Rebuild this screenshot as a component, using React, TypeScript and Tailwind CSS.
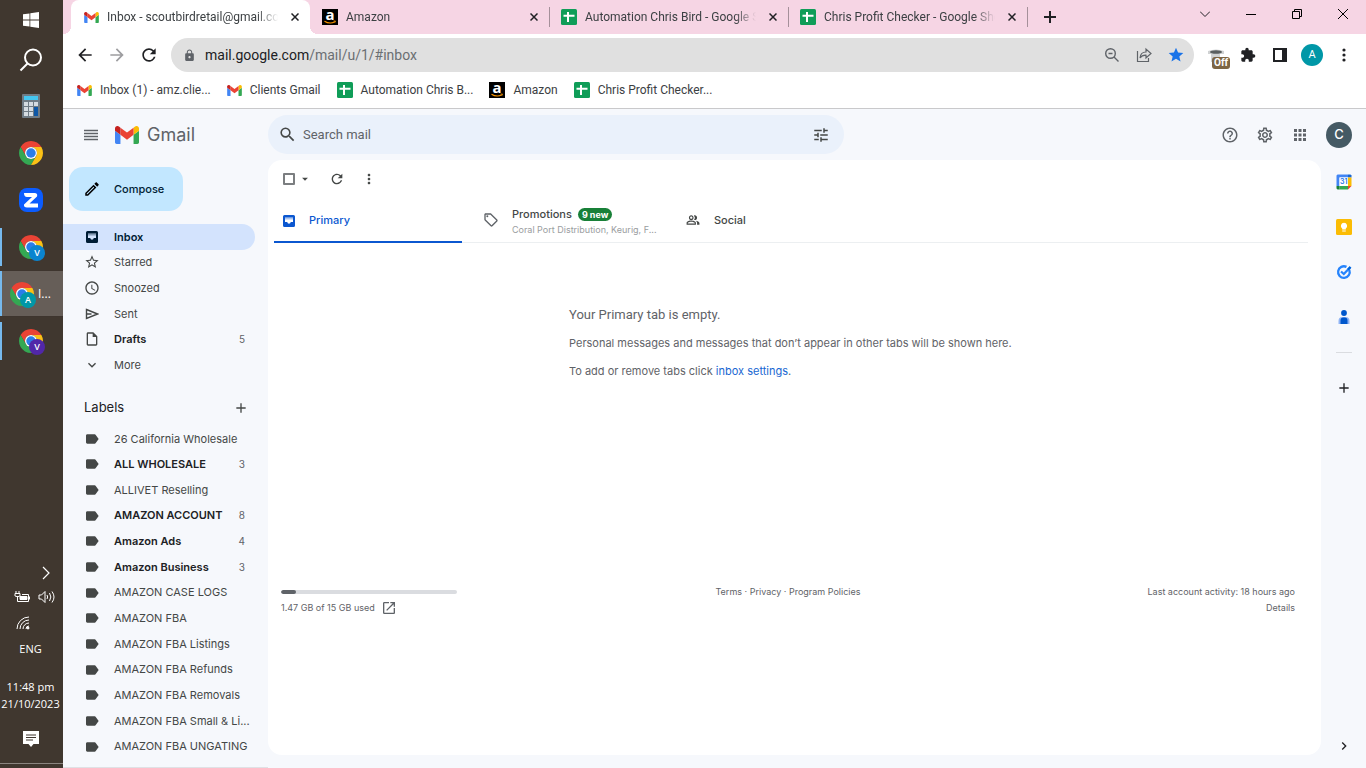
import React from "react";
import {
  MdAdd,
  MdApps,
  MdArrowBack,
  MdArrowDropDown,
  MdArrowForward,
  MdChevronRight,
  MdExpandMore,
  MdExtension,
  MdHelpOutline,
  MdLabel,
  MdLock,
  MdMoreVert,
  MdOpenInNew,
  MdOutlineEdit,
  MdOutlineInsertDriveFile,
  MdOutlinePeopleAlt,
  MdOutlineSell,
  MdOutlineSettings,
  MdRefresh,
  MdSchedule,
  MdSearch,
  MdStar,
  MdStarOutline,
  MdTune,
} from "react-icons/md";

type P = { className?: string };

const GmailLogo = ({ className = "h-[11px] w-[15px]" }: P) => (
  <svg viewBox="52 42 88 66" className={className} aria-hidden="true">
    <path fill="#4285f4" d="M58 108h14V74L52 59v43c0 3.32 2.69 6 6 6" />
    <path fill="#34a853" d="M120 108h14c3.32 0 6-2.69 6-6V59l-20 15" />
    <path fill="#fbbc04" d="M120 48v26l20-15v-8c0-7.42-8.47-11.65-14.4-7.2" />
    <path fill="#ea4335" d="M72 74V48l24 18 24-18v26L96 92" />
    <path fill="#c5221f" d="M52 51v8l20 15V48l-5.6-4.2c-5.94-4.45-14.4-.22-14.4 7.2" />
  </svg>
);

const SheetsLogo = () => (
  <svg viewBox="0 0 16 16" className="size-4" aria-hidden="true">
    <rect width="16" height="16" rx="1.5" fill="#0f9d58" />
    <path d="M6 3h2v2.800h5.500v2H8V13H6V7.800H2.500v-2H6z" fill="#fff" />
  </svg>
);

const AmazonLogo = () => (
  <svg viewBox="0 0 16 16" className="size-4" aria-hidden="true">
    <rect width="16" height="16" fill="#000" />
    <text x="8" y="11" textAnchor="middle" fontSize="15" fontWeight="700" fill="#fff" fontFamily="Open Sans, sans-serif">
      a
    </text>
    <path d="M2.500 12.200q5.200 3.400 10.300.6" fill="none" stroke="#f90" strokeWidth="1.100" />
    <path d="M11.600 12h1.900l-.6 1.700" fill="none" stroke="#f90" strokeWidth=".8" />
  </svg>
);

const ChromeLogo = () => (
  <svg viewBox="0 0 48 48" className="size-6" aria-hidden="true">
    <path fill="#ea4335" d="M24 12h20.780A24 24 0 0 0 3.220 12L13.610 30A12 12 0 0 1 24 12z" />
    <path fill="#34a853" d="M13.610 30L3.220 12A24 24 0 0 0 24 48L34.390 30A12 12 0 0 1 13.610 30z" />
    <path fill="#fbc116" d="M34.390 30L24 48A24 24 0 0 0 44.780 12H24A12 12 0 0 1 34.390 30z" />
    <circle cx="24" cy="24" r="12" fill="#fff" />
    <circle cx="24" cy="24" r="9.500" fill="#2a7de9" />
  </svg>
);

const InboxIcon = () => (
  <svg viewBox="0 0 12 12" className="size-3" aria-hidden="true" fill="currentColor">
    <path
      fillRule="evenodd"
      d="M1.500 0h9A1.500 1.500 0 0 1 12 1.500v9a1.500 1.500 0 0 1-1.500 1.500h-9A1.500 1.500 0 0 1 0 10.500v-9A1.500 1.500 0 0 1 1.500 0zM2 2.500V7h2.200q.3 1.700 1.800 1.700T7.800 7H10V2.500z"
    />
    <path d="M2 2.500h8v2H2z" opacity=".35" />
  </svg>
);

function ChromeProfile({ letter, badge, active }: { letter: string; badge: string; active?: boolean }) {
  return (
    <button
      aria-label={`Chrome profile ${letter}`}
      className={`flex h-[47px] w-full items-center ${active ? "border-y border-[#3e352e] bg-[#665e58]" : ""}`}
    >
      <span className={`w-0.5 bg-[#76b9ed] ${active ? "h-full" : "h-[38px]"}`} />
      <span className={`relative ${active ? "ml-2" : "ml-[17px]"}`}>
        <ChromeLogo />
        <span className={`absolute top-2.5 left-2.5 flex size-4 items-center justify-center rounded-full text-[9px] leading-none font-semibold text-white ${badge}`}>
          {letter}
        </span>
      </span>
      {active && <span className="ml-1 text-[12px] text-white">I...</span>}
    </button>
  );
}

function Taskbar() {
  return (
    <aside className="flex w-[63px] shrink-0 flex-col items-center bg-[#40372f] font-['Open_Sans',sans-serif] text-white">
      <button aria-label="Start" className="flex h-10 w-full items-center justify-center pr-0.5">
        <svg viewBox="0 0 16 16" className="size-4" fill="#fff">
          <path d="M0 2.300l6.500-.9v6.200H0zM7.300 1.300L16 0v7.600H7.300zM0 8.400h6.500v6.200L0 13.700zM7.300 8.400H16V16l-8.700-1.200z" />
        </svg>
      </button>
      <button aria-label="Search" className="flex h-10 w-full items-center justify-center pr-0.5">
        <svg viewBox="0 0 24 24" className="size-6" fill="none" stroke="#fff" strokeWidth="2">
          <circle cx="14" cy="9.500" r="8" />
          <path d="M8.500 15.500L1.500 22.500" />
        </svg>
      </button>
      <div className="flex w-full flex-col pt-0.5">
        <button aria-label="Calculator" className="flex h-[47px] items-center justify-center pr-0.5">
          <svg viewBox="0 0 18 24" className="h-6 w-[18px]">
            <rect width="18" height="24" rx="1" fill="#6f7b85" />
            <rect x="2" y="2" width="14" height="4" fill="#45c6f0" />
            <path fill="#d5dce2" d="M2 8h4v4H2zM7 8h4v4H7zM12 8h4v4h-4zM2 13h4v4H2zM7 13h4v4H7zM2 18h4v4H2zM7 18h4v4H7z" />
            <rect x="12" y="13" width="4" height="9" fill="#0d57a7" />
          </svg>
        </button>
        <button aria-label="Chrome" className="flex h-[47px] items-center justify-center pr-0.5">
          <ChromeLogo />
        </button>
        <button aria-label="Zoom" className="flex h-[47px] items-center justify-center pr-0.5">
          <svg viewBox="0 0 24 24" className="size-6">
            <rect width="24" height="24" rx="8" fill="#0b5cff" />
            <path d="M5 5h10.500q3.500 0 2.500 3.500L10.500 15.500H19v4H8q-3.500 0-3-3L13 9H8Q5 9 5 5z" fill="#fff" />
          </svg>
        </button>
        <ChromeProfile letter="V" badge="bg-[#0a84cf]" />
        <ChromeProfile letter="A" badge="bg-[#0097a7]" active />
        <ChromeProfile letter="V" badge="bg-[#5127a8]" />
      </div>
      <div className="mt-auto flex w-full flex-col items-center pr-0.5 text-[11px] leading-[17px]">
        <svg viewBox="0 0 8 14" className="mr-[11px] h-[14px] w-2 self-end" fill="none" stroke="#fff" strokeWidth="1.200">
          <path d="M1 1l6 6-6 6" />
        </svg>
        <div className="mt-2.5 flex items-center gap-2 pl-2">
          <svg viewBox="0 0 16 14" className="h-[14px] w-4" fill="none" stroke="#fff">
            <path d="M2 1v2M5 1v2M1 3.500h5v2.500q-2.500 1.500-5 0zM3.500 6v5.500H14.500V4.500H8M15.500 6.500v3" />
            <path d="M6 6.500h7v3H6z" fill="#fff" />
          </svg>
          <svg viewBox="0 0 17 14" className="h-[14px] w-[17px]" fill="none" stroke="#fff">
            <path d="M1 5h2.500L7 1.500v11L3.500 9H1zM9 5q1.300 2 0 4M11.500 3q2.700 4 0 8M14 1.500q4 5.500 0 11" />
          </svg>
        </div>
        <svg viewBox="0 0 14 14" className="mt-3 mr-4 size-[14px]" fill="none" stroke="#fff">
          <path d="M1 13A12 12 0 0 1 13 1M4 13a9 9 0 0 1 9-9M7 13a6 6 0 0 1 6-6M10 13a3 3 0 0 1 3-3" />
          <circle cx="12" cy="12" r="1" fill="#fff" />
        </svg>
        <span className="mt-2.5">ENG</span>
        <span className="mt-[21px]">11:48 pm</span>
        <span>21/10/2023</span>
        <button aria-label="Notifications" className="mt-[19px] mb-[15px]">
          <svg viewBox="0 0 16 17" className="h-[17px] w-4">
            <path d="M0 0h16v13h-5.500L8 16l-2.500-3H0z" fill="#fff" />
            <path d="M3 4h10M3 6.500h10M3 9h7" stroke="#40372f" />
          </svg>
        </button>
      </div>
      <div className="mb-1 h-px w-full bg-[#8b8580]" />
    </aside>
  );
}

function CloseX() {
  return (
    <svg viewBox="0 0 8 8" className="size-2" stroke="#202124" strokeWidth="1.500">
      <path d="M.5.5l7 7M7.500.5l-7 7" />
    </svg>
  );
}

const browserTabs = [
  { title: "Inbox - scoutbirdretail@gmail.com", icon: <GmailLogo />, active: true },
  { title: "Amazon", icon: <AmazonLogo /> },
  { title: "Automation Chris Bird - Google Sheets", icon: <SheetsLogo /> },
  { title: "Chris Profit Checker - Google Sheets", icon: <SheetsLogo /> },
];

function TabStrip() {
  return (
    <div className="flex h-[34px] bg-[#f6d5e4] pl-2">
      {browserTabs.map((t) => (
        <div
          key={t.title}
          className={`relative flex w-[239px] items-center gap-2 pr-[11px] pl-3 ${t.active ? "rounded-t-lg bg-white" : ""}`}
        >
          {t.active && (
            <>
              <span className="absolute bottom-0 -left-2 size-2 bg-[radial-gradient(circle_at_top_left,transparent_8px,white_8px)]" />
              <span className="absolute -right-2 bottom-0 size-2 bg-[radial-gradient(circle_at_top_right,transparent_8px,white_8px)]" />
            </>
          )}
          <span className="flex w-4 shrink-0 justify-center">{t.icon}</span>
          <span className="min-w-0 flex-1 overflow-hidden mask-r-from-[150px] mask-r-to-[171px] whitespace-nowrap">{t.title}</span>
          <button aria-label="Close tab" className="pl-1">
            <CloseX />
          </button>
          {!t.active && <span className="absolute top-[7px] -right-px h-5 w-px bg-[#a5909a]" />}
        </div>
      ))}
      <button aria-label="New tab" className="flex w-[46px] items-center justify-center">
        <svg viewBox="0 0 12 12" className="size-3" stroke="#202124" strokeWidth="2">
          <path d="M6 0v12M0 6h12" />
        </svg>
      </button>
      <div className="ml-auto flex h-7">
        <button aria-label="Search tabs" className="flex w-[46px] items-center justify-center">
          <svg viewBox="0 0 10 6" className="h-[6px] w-[10px]" fill="none" stroke="#202124">
            <path d="M0 .5l5 5 5-5" />
          </svg>
        </button>
        <button aria-label="Minimize" className="flex w-[46px] items-center justify-center">
          <span className="h-px w-2.5 bg-black" />
        </button>
        <button aria-label="Restore" className="flex w-[46px] items-center justify-center">
          <svg viewBox="0 0 10 10" className="size-2.5" fill="none" stroke="#000">
            <path d="M.5 2.500h7v7h-7zM2.500 2.500v-2h7v7h-2" />
          </svg>
        </button>
        <button aria-label="Close" className="flex w-[46px] items-center justify-center">
          <svg viewBox="0 0 10 10" className="size-2.5" stroke="#000">
            <path d="M0 0l10 10M10 0L0 10" />
          </svg>
        </button>
      </div>
    </div>
  );
}

function Toolbar() {
  return (
    <div className="flex h-[42px] items-center bg-white">
      <div className="flex w-[108px] items-center gap-3 pl-3 text-[20px] text-[#202124]">
        <button aria-label="Back"><MdArrowBack /></button>
        <button aria-label="Forward" className="text-[#9d9da0]"><MdArrowForward /></button>
        <button aria-label="Reload"><MdRefresh /></button>
      </div>
      <div className="flex h-[34px] flex-1 items-center rounded-full bg-[#e0e0e0] pr-2.5 pl-3 text-[14px]">
        <MdLock className="text-[13px] text-[#5f6368]" />
        <span className="ml-[9px] flex-1 text-[#202124]">
          mail.google.com<span className="text-[#6b6f73]">/mail/u/1/#inbox</span>
        </span>
        <div className="flex items-center gap-4 text-[#5f6368]">
          <svg viewBox="0 0 16 16" className="size-4" fill="none" stroke="currentColor" strokeWidth="1.400">
            <circle cx="6.500" cy="6.500" r="4.800" />
            <path d="M10 10l4.500 4.500M4.500 6.500h4" />
          </svg>
          <svg viewBox="0 0 16 16" className="size-4" fill="none" stroke="currentColor" strokeWidth="1.200">
            <path d="M1.500 4v10.500h11V11" />
            <path d="M4 11q.5-6 6-6V2l5 4.500-5 4.500V8.200Q6 8 4 11z" />
          </svg>
          <MdStar className="size-4 scale-110 text-[#1a73e8]" />
        </div>
      </div>
      <div className="flex items-center gap-3 pr-3 pl-3 text-[#202124]">
        <button aria-label="Keepa extension off" className="relative flex size-5 items-center justify-center">
          <svg viewBox="0 0 20 20" className="size-5">
            <path d="M2 6q8-3 16 0v3h-4v8H5V9H2z" fill="#d0d2d3" />
            <ellipse cx="10" cy="7" rx="6" ry="1.800" fill="#5a5f60" />
          </svg>
          <span className="absolute top-3 left-1.5 rounded-[3px] bg-[#7d6544] px-0.5 text-[10px] leading-3 font-bold text-white">Off</span>
        </button>
        <button aria-label="Extensions" className="flex w-5 justify-center"><MdExtension className="size-4" /></button>
        <button aria-label="Side panel" className="flex w-5 justify-center">
          <svg viewBox="0 0 14 14" className="size-[14px]">
            <path fillRule="evenodd" d="M0 0h14v14H0zM2 2v10h7V2z" fill="#202124" />
          </svg>
        </button>
        <button aria-label="Profile" className="-mx-px flex size-[22px] items-center justify-center rounded-full bg-[#0097a7] text-[11px] text-white">A</button>
        <button aria-label="Menu" className="flex w-5 justify-center">
          <svg viewBox="0 0 4 14" className="h-[14px] w-1" fill="#202124">
            <circle cx="2" cy="2" r="1.600" /><circle cx="2" cy="7" r="1.600" /><circle cx="2" cy="12" r="1.600" />
          </svg>
        </button>
      </div>
    </div>
  );
}

const bookmarks = [
  { title: "Inbox (1) - amz.clie...", icon: <GmailLogo /> },
  { title: "Clients Gmail", icon: <GmailLogo /> },
  { title: "Automation Chris B...", icon: <SheetsLogo /> },
  { title: "Amazon", icon: <AmazonLogo /> },
  { title: "Chris Profit Checker...", icon: <SheetsLogo /> },
];

function Bookmarks() {
  return (
    <div className="flex h-[33px] items-center gap-4 border-b border-[#c9c9cb] bg-white pb-1 pl-[14px]">
      {bookmarks.map((b) => (
        <a key={b.title} href="#" className="flex items-center gap-2 whitespace-nowrap">
          {b.icon}
          {b.title}
        </a>
      ))}
    </div>
  );
}

function Header() {
  return (
    <header className="flex h-[51px] items-center">
      <div className="flex w-[205px] shrink-0 items-center pl-5">
        <button aria-label="Main menu">
          <svg viewBox="0 0 16 12" className="h-3 w-4" stroke="#5f6368" strokeWidth="1.600">
            <path d="M1 1.500h14M1 4.500h14M1 7.500h14M1 10.500h14" />
          </svg>
        </button>
        <a href="#" className="ml-4 flex items-center gap-2 text-[18px] leading-6 text-[#5f6368]">
          <GmailLogo className="h-[18px] w-6" />
          Gmail
        </a>
      </div>
      <label className="flex h-[39px] w-[576px] items-center rounded-full bg-[#eaf1fb] px-[10px] text-[#444746]">
        <MdSearch className="size-[19px]" />
        <input placeholder="Search mail" aria-label="Search mail" className="ml-[6px] flex-1 bg-transparent font-[Roboto,sans-serif] text-[13px] outline-none placeholder:text-[#5f6368]" />
        <button aria-label="Search options" className="mr-1"><MdTune className="size-[18px]" /></button>
      </label>
      <div className="ml-auto flex items-center gap-[17px] pr-[14px] text-[#5f6368]">
        <button aria-label="Support"><MdHelpOutline className="size-[18px]" /></button>
        <button aria-label="Settings"><MdOutlineSettings className="size-[18px]" /></button>
        <button aria-label="Apps"><MdApps className="size-[18px]" /></button>
        <button aria-label="Account" className="flex size-[26px] items-center justify-center rounded-full bg-[#455a64] text-[13px] font-medium text-white">C</button>
      </div>
    </header>
  );
}

const SentIcon = () => (
  <svg viewBox="0 0 14 14" className="size-[14px]" fill="none" stroke="currentColor" strokeWidth="1.400">
    <path d="M1.500 2.500L12.500 7l-11 4.500zM1.500 7h5" />
  </svg>
);

const folders = [
  { name: "Inbox", icon: <InboxIcon />, active: true },
  { name: "Starred", icon: <MdStarOutline /> },
  { name: "Snoozed", icon: <MdSchedule /> },
  { name: "Sent", icon: <SentIcon /> },
  { name: "Drafts", icon: <MdOutlineInsertDriveFile />, count: 5 },
  { name: "More", icon: <MdExpandMore /> },
];

const labels: { name: string; count?: number }[] = [
  { name: "26 California Wholesale" },
  { name: "ALL WHOLESALE", count: 3 },
  { name: "ALLIVET Reselling" },
  { name: "AMAZON ACCOUNT", count: 8 },
  { name: "Amazon Ads", count: 4 },
  { name: "Amazon Business", count: 3 },
  { name: "AMAZON CASE LOGS" },
  { name: "AMAZON FBA" },
  { name: "AMAZON FBA Listings" },
  { name: "AMAZON FBA Refunds" },
  { name: "AMAZON FBA Removals" },
  { name: "AMAZON FBA Small & Li..." },
  { name: "AMAZON FBA UNGATING" },
  { name: "AMAZON Seller" },
];

function NavRow({ name, icon, count, active }: { name: string; icon: React.ReactNode; count?: number; active?: boolean }) {
  const tone = active
    ? "bg-[#d3e3fd] font-semibold text-[#001d35]"
    : count
      ? "font-semibold text-[#202124]"
      : "text-[#444746]";
  return (
    <a href="#" className={`flex items-center rounded-r-full pl-[21px] text-[11px] whitespace-nowrap ${tone}`}>
      <span className={`flex w-4 justify-center text-[16px] ${active ? "" : "text-[#444746]"}`}>{icon}</span>
      <span className="ml-[14px] flex-1">{name}</span>
      {count && <span className="pr-[10px] text-[10px] font-normal text-[#5f6368]">{count}</span>}
    </a>
  );
}

function Sidebar() {
  return (
    <nav className="flex w-[205px] shrink-0 flex-col overflow-hidden border-b border-[#dfe1e5] pr-[13px]">
      <button className="mt-[7px] ml-1.5 flex h-11 w-[114px] shrink-0 items-center gap-[13px] rounded-[14px] bg-[#c2e7ff] pl-[14px] text-[11px] font-medium text-[#001d35]">
        <MdOutlineEdit className="size-[18px] text-black" />
        Compose
      </button>
      <div className="mt-[13px] grid h-[154px] shrink-0 auto-rows-fr grid-cols-1">
        {folders.map((f) => <NavRow key={f.name} {...f} />)}
      </div>
      <div className="flex h-12 shrink-0 items-center justify-between pt-[11px] pr-1.5 pl-[21px]">
        <h2 className="text-[13px] text-[#202124]">Labels</h2>
        <button aria-label="Create new label"><MdAdd className="size-4 text-[#444746]" /></button>
      </div>
      <div className="grid h-[359px] shrink-0 auto-rows-fr grid-cols-1">
        {labels.map((l) => <NavRow key={l.name} name={l.name} count={l.count} icon={<MdLabel />} />)}
      </div>
    </nav>
  );
}

function Inbox() {
  return (
    <main className="mb-[13px] flex flex-1 flex-col rounded-[14px] bg-white text-[#5f6368]">
      <div className="flex h-[38px] items-center pl-[15px] text-[#444746]">
        <input type="checkbox" aria-label="Select" className="size-3 appearance-none rounded-[1px] border-2 border-[#7b7e80]" />
        <MdArrowDropDown className="ml-[3px] size-[14px]" />
        <button aria-label="Refresh" className="ml-[17px]"><MdRefresh className="size-4" /></button>
        <button aria-label="More" className="ml-4"><MdMoreVert className="size-4" /></button>
      </div>
      <div role="tablist" className="mr-[13px] ml-1.5 flex h-[45px] gap-[14px] border-b border-[#eceff1] text-[11px] font-medium">
        <button role="tab" aria-selected="true" className="-mb-px flex w-[188px] items-center gap-[14px] border-b-2 border-[#0b57d0] pt-0.5 pl-[9px] text-[#0b57d0]">
          <InboxIcon />
          Primary
        </button>
        <button role="tab" className="flex w-[188px] items-center gap-[13px] pl-[7px] text-left">
          <MdOutlineSell className="size-4 shrink-0" />
          <span className="min-w-0 pt-1">
            <span className="flex h-4 items-center gap-1.5 text-[#444746]">
              Promotions
              <span className="rounded-full bg-[#188038] px-1 text-[9px] leading-[13px] font-bold text-white">9 new</span>
            </span>
            <span className="block text-[9px] leading-4 font-normal whitespace-nowrap text-[#9a9da0]">Coral Port Distribution, Keurig, F...</span>
          </span>
        </button>
        <button role="tab" className="flex w-[188px] items-center gap-[14px] pl-2 text-[#444746]">
          <MdOutlinePeopleAlt className="size-[14px]" />
          Social
        </button>
      </div>
      <section className="ml-[301px] pt-[62px] text-[11px] leading-4">
        <h1 className="font-[Roboto,sans-serif] text-[13px] leading-5">Your Primary tab is empty.</h1>
        <p className="mt-2.5">Personal messages and messages that don’t appear in other tabs will be shown here.</p>
        <p className="mt-3">
          To add or remove tabs click <a href="#" className="text-[#1967d2]">inbox settings</a>.
        </p>
      </section>
      <footer className="mt-[205px] grid grid-cols-3 pr-[26px] pl-[13px] text-[9px] leading-4">
        <div>
          <div className="mt-1.5 h-1 w-44 overflow-hidden rounded-full bg-[#dadce0]">
            <div className="h-full w-[15px] rounded-full bg-[#5f6368]" />
          </div>
          <div className="mt-1.5 flex items-center gap-1.5">
            1.47 GB of 15 GB used
            <a href="#" aria-label="Manage storage"><MdOpenInNew className="size-4" /></a>
          </div>
        </div>
        <p className="text-center">
          <a href="#">Terms</a> · <a href="#">Privacy</a> · <a href="#">Program Policies</a>
        </p>
        <p className="text-right">
          Last account activity: 18 hours ago<br />
          <a href="#">Details</a>
        </p>
      </footer>
    </main>
  );
}

function SidePanel() {
  return (
    <aside className="flex w-[45px] shrink-0 flex-col items-center pt-[14px]">
      <div className="flex flex-col gap-[29px]">
        <button aria-label="Calendar">
          <svg viewBox="0 0 16 16" className="size-4">
            <path fill="#4285f4" d="M1.500.5H12v3H3.500V12h-3V1.500z" />
            <path fill="#1967d2" d="M12 .5h2.500l1 1v2H12z" />
            <path fill="#fbbc04" d="M12 3.500h3.500V12H12z" />
            <path fill="#34a853" d="M3.500 12H12v3.500H3.500z" />
            <path fill="#188038" d="M.5 12h3v3.500h-2l-1-1z" />
            <path fill="#ea4335" d="M12 12h3.500L12 15.500z" />
            <path fill="#fff" d="M3.500 3.500H12V12H3.500z" />
            <text x="7.800" y="10.300" textAnchor="middle" fontSize="7" fontWeight="600" fill="#1a73e8">31</text>
          </svg>
        </button>
        <button aria-label="Keep">
          <svg viewBox="0 0 16 16" className="size-4">
            <rect width="16" height="16" rx="1.500" fill="#fbbc04" />
            <path d="M8 3.800a3.200 3.200 0 0 1 1.800 5.800v1H6.200v-1A3.200 3.200 0 0 1 8 3.800zM6.200 11.400h3.600v1.200H6.200z" fill="#fff" />
          </svg>
        </button>
        <button aria-label="Tasks">
          <svg viewBox="0 0 16 16" className="size-4" fill="none">
            <path d="M13.300 6A5.800 5.800 0 1 1 10.500 2.900" stroke="#2684fc" strokeWidth="2.300" />
            <path d="M5 7.500L7.800 10l6.700-7" stroke="#2684fc" strokeWidth="2.300" />
            <path d="M12 5.600l2.500-2.600" stroke="#0066da" strokeWidth="2.300" />
          </svg>
        </button>
        <button aria-label="Contacts">
          <svg viewBox="0 0 16 16" className="size-4">
            <path d="M2.500 15v-3a4 4 0 0 1 4-4h3a4 4 0 0 1 4 4v3z" fill="#8fb4f5" />
            <path d="M4.500 15v-3.500a3 3 0 0 1 3-3h1a3 3 0 0 1 3 3V15z" fill="#0057cc" />
            <circle cx="8" cy="4" r="2.900" fill="#0057cc" />
          </svg>
        </button>
      </div>
      <div className="mt-[27px] h-px w-4 bg-[#dadce0]" />
      <button aria-label="Get add-ons" className="mt-[27px]"><MdAdd className="size-4 text-[#202124]" /></button>
      <button aria-label="Hide side panel" className="mt-auto mb-[14px]"><MdChevronRight className="size-4 text-[#202124]" /></button>
    </aside>
  );
}

export default function App() {
  return (
    <div className="flex h-screen overflow-hidden">
      <Taskbar />
      <div className="flex min-w-0 flex-1 flex-col">
        <div className="shrink-0 font-[Roboto,sans-serif] text-[12px] text-[#3c4043]">
          <TabStrip />
          <Toolbar />
          <Bookmarks />
        </div>
        <div className="flex min-h-0 flex-1 flex-col bg-[#f6f8fc] font-[Inter,sans-serif]">
          <Header />
          <div className="flex min-h-0 flex-1">
            <Sidebar />
            <Inbox />
            <SidePanel />
          </div>
        </div>
      </div>
    </div>
  );
}
